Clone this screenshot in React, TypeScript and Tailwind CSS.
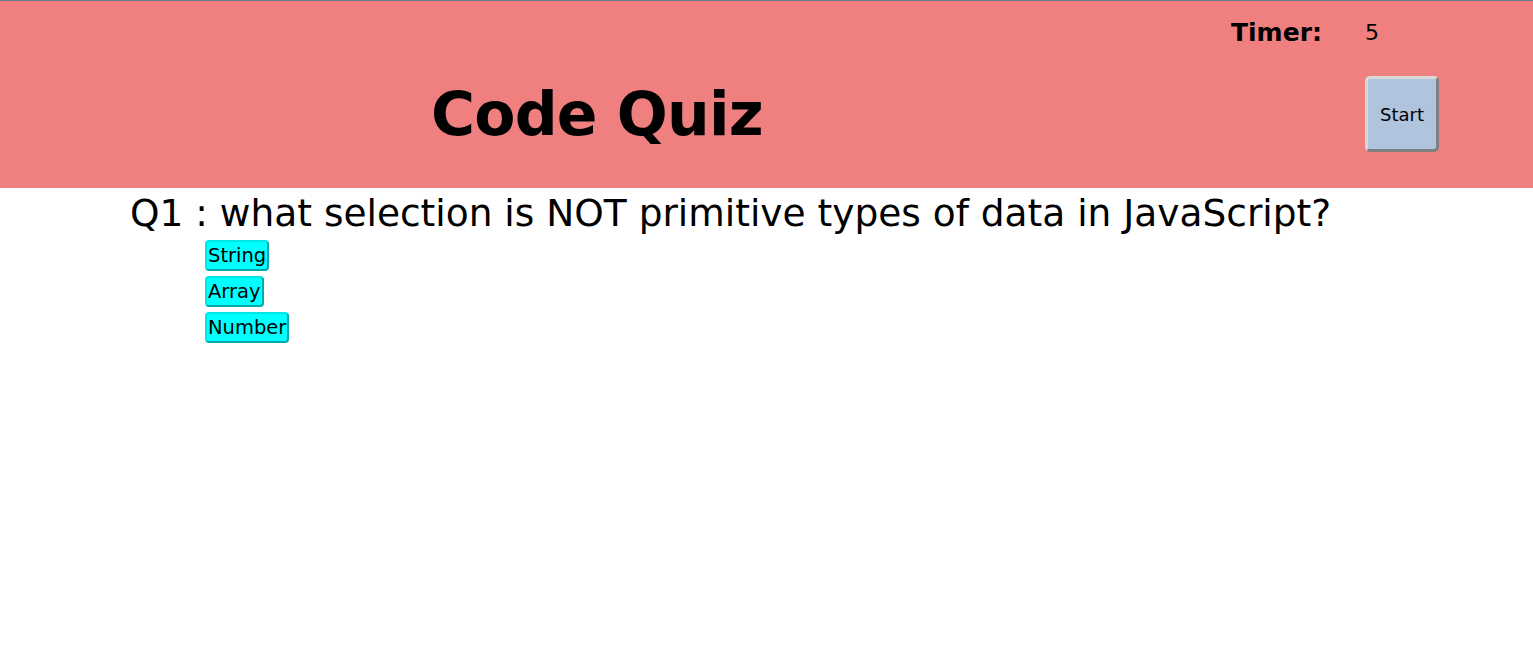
export default function App() {
  const answers = ["String", "Array", "Number"];
  return (
    <div className="min-h-[652px] bg-white font-['DejaVu_Sans',sans-serif] text-black">
      <header className="h-[188px] border-t border-[#6b7a88] bg-[#f08080]">
        <div className="flex items-center pt-[16px] pl-[1231px]">
          <span className="text-[25px] font-bold leading-[32px]">Timer:</span>
          <span className="ml-[43px] text-[22px] leading-[32px]">5</span>
        </div>
        <div className="flex items-center mt-[27px]">
          <h1 className="ml-[431px] text-[60px] font-bold leading-[76px] tracking-[-0.8px]">Code Quiz</h1>
          <button className="ml-auto mr-[94px] w-[74px] h-[76px] bg-[#b0c4de] rounded-[5px] border-[3px] border-t-[#d9d9d9] border-l-[#d9d9d9] border-r-[#808080] border-b-[#808080] text-[18px]">
            Start
          </button>
        </div>
      </header>
      <main className="pl-[130px]">
        <p className="text-[37.5px] leading-[50px]">Q1 : what selection is NOT primitive types of data in JavaScript?</p>
        <ul className="pl-[75px] mt-[2px] flex flex-col items-start gap-[5px]">
          {answers.map((a) => (
            <li key={a}>
              <button className="bg-[#00ffff] rounded-[4px] border-[2px] border-t-[#00e5e5] border-l-[#00e5e5] border-r-[#00aaaa] border-b-[#00aaaa] px-[1px] text-[19.5px] leading-[27px]">
                {a}
              </button>
            </li>
          ))}
        </ul>
      </main>
    </div>
  );
}
